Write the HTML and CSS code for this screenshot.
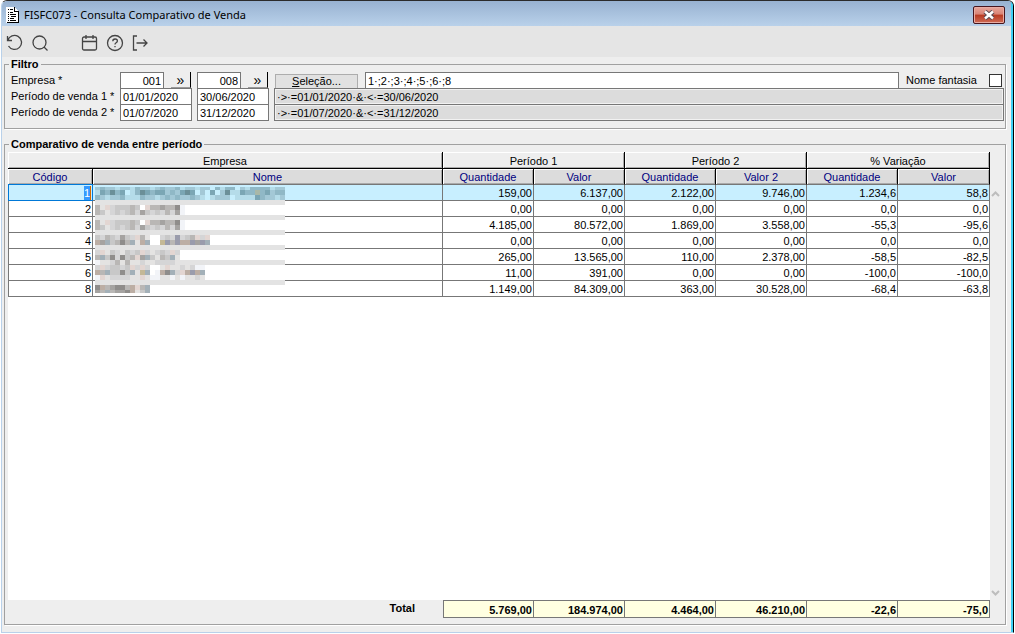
FILE: index.html
```html
<!DOCTYPE html>
<html lang="pt-BR">

<head>
    <meta charset="UTF-8">
    <meta name="viewport" content="width=device-width, initial-scale=1.0">
    <title>FISFC073 - Consulta Comparativo de Venda</title>
    <link rel="stylesheet" href="styles.css">
</head>

<body>
    <div class="window">
        <header class="titlebar">
            <svg class="app-icon" width="13" height="16" viewBox="0 0 13 16" shape-rendering="crispEdges">
                <path d="M0 0h9v1h1v1h1v1h1v13H0z" fill="#fff" />
                <path d="M12 4h1v12H1v-1h11zM8 0h1v4h4v1H8z" fill="#000" />
                <path d="M2 2h1v1H2zM4 2h3v1H4zM2 5h1v1H2zM4 5h3v1H4zM2 7h1v1H2zM4 7h6v1H4zM2 9h1v1H2zM5 9h5v1H5zM2 11h1v1H2zM4 11h4v1H4zM2 13h1v1H2zM4 13h6v1H4z" fill="#000" />
            </svg>
            <h1 class="title">FISFC073 - Consulta Comparativo de Venda</h1>
            <button class="close" type="button" aria-label="Fechar">
                <svg width="12" height="10" viewBox="0 0 12 10">
                    <path d="M2 1.500l8 7M10 1.500l-8 7" stroke="#5b4a52" stroke-width="4.500" />
                    <path d="M2 1.500l8 7M10 1.500l-8 7" stroke="#fff" stroke-width="2.500" />
                </svg>
            </button>
        </header>

        <nav class="toolbar">
            <button class="tool" type="button" aria-label="Desfazer">
                <svg width="18" height="18" viewBox="0 0 18 18"><path d="M1.500 2v4.500h4.500M1.800 6.500A7 7 0 1 1 2.500 12" /></svg>
            </button>
            <button class="tool tool-last" type="button" aria-label="Pesquisar">
                <svg width="18" height="18" viewBox="0 0 18 18"><circle cx="8.500" cy="8.500" r="6.500" /><path d="M13 13l3.500 3.500" /></svg>
            </button>
            <button class="tool" type="button" aria-label="Calendário">
                <svg width="18" height="18" viewBox="0 0 18 18"><rect x="1.500" y="3" width="14" height="13" rx="1.500" /><path d="M1.500 7.500h14M5 1v4M12 1v4" /></svg>
            </button>
            <button class="tool" type="button" aria-label="Ajuda">
                <svg width="18" height="18" viewBox="0 0 18 18"><circle cx="9" cy="9" r="7.500" /><path d="M6.800 7.200c0-3 4.600-2.800 4.600-.2 0 1.700-2.400 1.800-2.400 3.400M9 12v1.300" /></svg>
            </button>
            <button class="tool" type="button" aria-label="Sair">
                <svg width="18" height="18" viewBox="0 0 18 18"><path d="M6 2H2.500v14H6M5.500 9H16M12.500 5.500L16 9l-3.500 3.500" /></svg>
            </button>
        </nav>

        <fieldset class="group">
            <legend>Filtro</legend>
            <div class="filter-row">
                <label for="empresa-de">Empresa *</label>
                <div class="pair">
                    <input class="field code" id="empresa-de" type="text" value="001">
                    <button class="lookup" type="button" aria-label="Buscar empresa inicial">»</button>
                </div>
                <div class="pair">
                    <input class="field code" type="text" value="008" aria-label="Empresa final">
                    <button class="lookup" type="button" aria-label="Buscar empresa final">»</button>
                </div>
                <div class="selection">
                    <button class="select-btn" type="button"><u>S</u>eleção...</button>
                    <input class="field list" type="text" value="1·;2·;3·;4·;5·;6·;8" aria-label="Empresas selecionadas">
                    <label for="fantasia">Nome fantasia</label>
                    <input class="check" id="fantasia" type="checkbox">
                </div>
            </div>
            <div class="filter-row">
                <label for="p1-de">Período de venda 1 *</label>
                <input class="field" id="p1-de" type="text" value="01/01/2020">
                <input class="field" type="text" value="30/06/2020" aria-label="Período 1 final">
                <input class="field readonly" type="text" value="·&gt;·=01/01/2020·&amp;·&lt;·=30/06/2020" aria-label="Expressão período 1" readonly>
            </div>
            <div class="filter-row">
                <label for="p2-de">Período de venda 2 *</label>
                <input class="field" id="p2-de" type="text" value="01/07/2020">
                <input class="field" type="text" value="31/12/2020" aria-label="Período 2 final">
                <input class="field readonly" type="text" value="·&gt;·=01/07/2020·&amp;·&lt;·=31/12/2020" aria-label="Expressão período 2" readonly>
            </div>
        </fieldset>

        <fieldset class="group group-grid">
            <legend>Comparativo de venda entre período</legend>
            <div class="grid-area">
                <div class="grid-pane">
                    <table class="grid">
                        <colgroup>
                            <col class="col-code"><col>
                            <col class="col-num"><col class="col-num"><col class="col-num">
                            <col class="col-num"><col class="col-num"><col class="col-end">
                        </colgroup>
                        <thead>
                            <tr class="bands">
                                <th colspan="2">Empresa</th>
                                <th colspan="2">Período 1</th>
                                <th colspan="2">Período 2</th>
                                <th colspan="2">% Variação</th>
                            </tr>
                            <tr class="heads">
                                <th>Código</th>
                                <th>Nome</th>
                                <th>Quantidade</th>
                                <th>Valor</th>
                                <th>Quantidade</th>
                                <th>Valor 2</th>
                                <th>Quantidade</th>
                                <th>Valor</th>
                            </tr>
                        </thead>
                        <tbody>
                            <tr class="current"><td><span class="caret">1</span></td><td></td><td>159,00</td><td>6.137,00</td><td>2.122,00</td><td>9.746,00</td><td>1.234,6</td><td>58,8</td></tr>
                            <tr><td>2</td><td></td><td>0,00</td><td>0,00</td><td>0,00</td><td>0,00</td><td>0,0</td><td>0,0</td></tr>
                            <tr><td>3</td><td></td><td>4.185,00</td><td>80.572,00</td><td>1.869,00</td><td>3.558,00</td><td>-55,3</td><td>-95,6</td></tr>
                            <tr><td>4</td><td></td><td>0,00</td><td>0,00</td><td>0,00</td><td>0,00</td><td>0,0</td><td>0,0</td></tr>
                            <tr><td>5</td><td></td><td>265,00</td><td>13.565,00</td><td>110,00</td><td>2.378,00</td><td>-58,5</td><td>-82,5</td></tr>
                            <tr><td>6</td><td></td><td>11,00</td><td>391,00</td><td>0,00</td><td>0,00</td><td>-100,0</td><td>-100,0</td></tr>
                            <tr><td>8</td><td></td><td>1.149,00</td><td>84.309,00</td><td>363,00</td><td>30.528,00</td><td>-68,4</td><td>-63,8</td></tr>
                        </tbody>
                    </table>
                    <svg class="mask" id="mask" width="190" height="106" viewBox="0 0 190 106" shape-rendering="crispEdges"></svg>
                </div>
                <div class="scroll">
                    <svg width="9" height="6" viewBox="0 0 9 6"><path d="M1 5l3.500-3.500L8 5" /></svg>
                    <svg width="9" height="6" viewBox="0 0 9 6"><path d="M1 1l3.500 3.500L8 1" /></svg>
                </div>
            </div>
            <table class="grid totals">
                <colgroup>
                    <col><col class="col-num"><col class="col-num"><col class="col-num">
                    <col class="col-num"><col class="col-num"><col class="col-end">
                </colgroup>
                <tbody>
                    <tr><th scope="row">Total</th><td>5.769,00</td><td>184.974,00</td><td>4.464,00</td><td>46.210,00</td><td>-22,6</td><td>-75,0</td></tr>
                </tbody>
            </table>
        </fieldset>
    </div>
    <script src="mask.js"></script>
</body>

</html>
```

FILE: styles.css
```css
* {
    box-sizing: border-box;
}

body {
    margin: 0;
    background: #fff;
    font-family: "Liberation Sans", Arial, sans-serif;
    font-size: 11px;
    line-height: 12px;
    color: #000;
}

button,
input {
    font: inherit;
    color: inherit;
    margin: 0;
    border-radius: 0;
}

.window {
    display: flex;
    flex-direction: column;
    height: calc(100vh - 1px);
    margin: 0 1px;
    padding-bottom: 7px;
    background: #eee;
    border-top: 1px solid #2b2b2b;
    border-left: 1px solid #b9d1ea;
    border-right: 1px solid #000;
    border-bottom: 1px solid #b9d1ea;
    border-radius: 6px 6px 0 0;
    overflow: hidden;
}

.titlebar {
    display: flex;
    align-items: center;
    height: 25px;
    padding: 2px 6px 0 4px;
    background: linear-gradient(#98b2d1, #b9d1ea);
}

.titlebar,
.toolbar {
    border-right: 2px solid #3fd0f5;
}

.title {
    flex: 1;
    margin: 0 0 0 5px;
    font-family: "Noto Sans", "Open Sans", sans-serif;
    font-size: 11px;
    font-weight: 400;
    line-height: 16px;
}

.close {
    display: flex;
    align-items: center;
    justify-content: center;
    width: 32px;
    height: 18px;
    padding: 0;
    background: linear-gradient(#e8a79c, #d98375 45%, #b83a22 50%, #cf6b55);
    border: 1px solid #47151d;
    border-radius: 2px;
    box-shadow: inset 0 0 0 1px #e9aca3;
}

.toolbar {
    display: flex;
    align-items: center;
    gap: 7px;
    height: 31px;
    padding: 2px 4px 0;
    background: #e5e5e5;
}

.tool {
    display: flex;
    padding: 0;
    background: none;
    border: 0;
}

.tool-last {
    margin-right: 25px;
}

.tool svg {
    fill: none;
    stroke: #444;
    stroke-width: 1.3;
}

.window {
    box-shadow: inset -2px 0 #3fd0f5;
}

.group {
    min-width: 0;
    margin: 1px 7px 0 2px;
    padding: 2px 1px 7px 3px;
    border: 1px solid #a0a0a0;
    box-shadow: 1px 1px #fff;
}

.group legend {
    margin-left: 1px;
    padding: 0 2px;
    background: #eee;
    font-weight: 700;
    line-height: 12px;
}

.filter-row {
    display: grid;
    grid-template-columns: 104px 72px 72px 1fr;
    column-gap: 5px;
    height: 16px;
    padding-left: 3px;
}

.filter-row:last-child {
    height: 17px;
}

.filter-row label {
    line-height: 17px;
    white-space: nowrap;
}

.field {
    width: 100%;
    min-width: 0;
    height: 17px;
    padding: 1px 2px 0;
    background: #fff;
    border: 1px solid #777;
}

.readonly {
    background: #dcdcdc;
    box-shadow: inset 0 0 0 1px #f2f2f2;
}

.pair {
    display: flex;
    justify-content: space-between;
    padding-right: 1px;
}

.code {
    width: 44px;
    text-align: right;
}

.lookup {
    width: 20px;
    height: 16px;
    padding: 0;
    background: #eee;
    border: 0;
    border-right: 1px solid #000;
    border-bottom: 1px solid #999;
    font-size: 14px;
    line-height: 14px;
}

.selection {
    display: flex;
    gap: 7px;
    padding: 0 2px 0 1px;
}

.select-btn {
    width: 83px;
    height: 15px;
    margin-top: 2px;
    padding: 0;
    background: #e1e1e1;
    border: 1px solid #adadad;
    line-height: 13px;
}

.list {
    flex: 1;
}

.selection label {
    width: 76px;
}

.check {
    appearance: none;
    width: 13px;
    height: 13px;
    margin-top: 2px;
    background: #fff;
    border: 1px solid #333;
}

.group-grid {
    display: flex;
    flex-direction: column;
    flex: 1;
    margin-top: 9px;
    padding-bottom: 6px;
}

.grid-area {
    display: flex;
    flex: 1;
}

.grid-pane {
    position: relative;
    flex: 1;
    background: #fff;
}

.grid {
    width: 100%;
    table-layout: fixed;
    border-collapse: separate;
    border-spacing: 0;
}

.col-code {
    width: 85px;
}

.col-num {
    width: 91px;
}

.col-end {
    width: 92px;
}

.grid th,
.grid td {
    height: 16px;
    padding: 1px 1px 0;
    line-height: 14px;
    white-space: nowrap;
}

.grid td {
    text-align: right;
    border-right: 1px solid #777;
    border-bottom: 1px solid #777;
}

.grid td:first-child {
    border-left: 1px solid #777;
}

.bands th,
.heads th {
    font-weight: 400;
    border-right: 1px solid #000;
}

.grid .bands th {
    height: 17px;
    background: #eee;
    border-bottom: 1px solid #000;
    box-shadow: inset 1px 1px #fff, inset -1px -1px #aaa;
}

.heads th {
    color: #000080;
    background: #dcdcdc;
    border-bottom: 1px solid #777;
    box-shadow: inset 1px 1px #fff, inset -1px -1px #aaa;
}

.current td {
    background: #c8efff;
}

.grid .current td:first-child {
    border-color: #0078d7;
    box-shadow: 0 -1px #0078d7;
}

.caret {
    display: inline-block;
    background: #3399ff;
    border-right: 1px solid #d06a00;
    color: #fff;
}

.mask {
    position: absolute;
    top: 35px;
    left: 87px;
}

.scroll {
    display: flex;
    flex-direction: column;
    justify-content: space-between;
    width: 14px;
    padding: 39px 0 4px 1px;
}

.scroll svg {
    fill: none;
    stroke: #bdbdbd;
    stroke-width: 2;
}

.totals {
    width: calc(100% - 14px);
    font-weight: 700;
}

.grid.totals th {
    padding: 0 28px 2px 0;
    text-align: right;
}

.grid.totals td {
    height: 18px;
    background: #ffffe1;
    border-top: 1px solid #777;
}

.totals th + td {
    border-left: 1px solid #777;
}
```

FILE: mask.js
```js
// Mosaic that hides the company names, one character per 5px block
const SVG_NS = 'http://www.w3.org/2000/svg';
const BLOCK = 5;

const palette = {
    A: '#7ba6b4', B: '#90b8c6', C: '#a3c8d6', D: '#b5dce9', E: '#c8effd', F: '#6b8f98', G: '#a9b8a8',
    1: '#8f8d8b', 2: '#a5a3a1', 3: '#b9b7b5', 4: '#c8c8c8', 5: '#d5d5d6', 6: '#e4e3e2', 7: '#f2f4f8',
    p: '#e3d6d2', b: '#9a9cac', t: '#bcaea4', c: '#a3b0b8', y: '#c4b896'
};

// [top, height, blocks]
const lines = [
    [0, 3, 'CBCCDCCDBCCDCBCCBDCCDCCEBDBBECDBBBBDCC'],
    [3, 5, 'DABFBAEDBFABAACBCAFAECEAECFDDABBGBACBB'],
    [8, 5, 'BCDCCBDDDBCCDCBCBCCBCDEDCCCEDDDDABCCDC'],
    [18, 5, '36p544434 p3323317'],
    [23, 5, '346545435245453527'],
    [33, 5, '36p544434 p3323317'],
    [38, 5, '346545435245453527'],
    [48, 5, '45345245p36  545b543p5p'],
    [53, 5, 't2c4313c6tc  yb3bttb2bc'],
    [63, 5, '5p6456454p56545p5'],
    [68, 5, '3c415143p2c4634c6'],
    [73, 5, '76653636656655556'],
    [78, 5, '5p54454p5p5  6p6656577'],
    [83, 5, 't3c4414c6yc 7t1c5ptbtc'],
    [88, 5, '7p6555566p677667676656'],
    [98, 5, '1t32113tp3c'],
    [103, 3, '23c3221t64c']
];

const stripes = [13, 28, 43, 58, 73, 93];

const mask = document.getElementById('mask');

function addRect(x, y, width, height, fill) {
    const rect = document.createElementNS(SVG_NS, 'rect');
    rect.setAttribute('x', x);
    rect.setAttribute('y', y);
    rect.setAttribute('width', width);
    rect.setAttribute('height', height);
    rect.setAttribute('fill', fill);
    mask.appendChild(rect);
}

addRect(0, 13, 190, 93, '#fff');
stripes.forEach(y => addRect(0, y, 190, BLOCK, '#e3e3e3'));

lines.forEach(([y, height, cells]) => {
    [...cells].forEach((key, i) => {
        if (palette[key]) {
            addRect(i * BLOCK, y, BLOCK, height, palette[key]);
        }
    });
});
```
